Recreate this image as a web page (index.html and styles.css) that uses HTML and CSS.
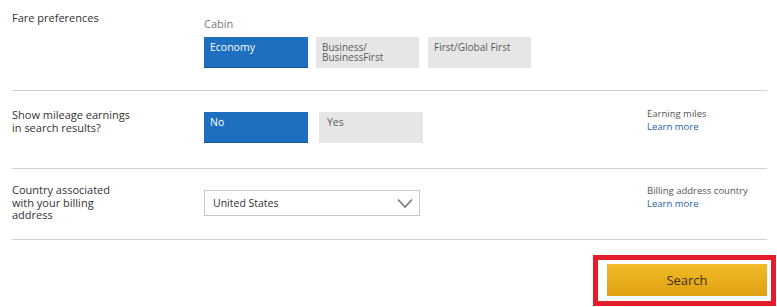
FILE: index.html
```html
<!DOCTYPE html>
<html lang="en">

<head>
    <meta charset="UTF-8">
    <meta name="viewport" content="width=device-width, initial-scale=1.0">
    <title>Search preferences</title>
    <link rel="stylesheet" href="styles.css">
</head>

<body>
    <div id="prefs">
        <div class="row row-fare">
            <div class="label">Fare preferences</div>
            <div class="control">
                <p class="sub-label">Cabin</p>
                <div class="options">
                    <button class="opt selected">Economy</button>
                    <button class="opt">Business/<br>BusinessFirst</button>
                    <button class="opt">First/Global First</button>
                </div>
            </div>
            <div class="info"></div>
        </div>

        <div class="row row-miles">
            <div class="label">Show mileage earnings<br>in search results?</div>
            <div class="control">
                <div class="options options-wide">
                    <button class="opt selected">No</button>
                    <button class="opt">Yes</button>
                </div>
            </div>
            <div class="info">
                <p>Earning miles</p>
                <a href="#">Learn more</a>
            </div>
        </div>

        <div class="row row-country">
            <div class="label">Country associated<br>with your billing<br>address</div>
            <div class="control">
                <div class="select">
                    <span>United States</span>
                    <svg width="16" height="11" viewBox="0 0 16 11">
                        <path d="M1 1.5 L8 9 L15 1.5" fill="none" stroke="#7a7a7a" stroke-width="1.6" />
                    </svg>
                </div>
            </div>
            <div class="info">
                <p>Billing address country</p>
                <a href="#">Learn more</a>
            </div>
        </div>

        <div class="actions">
            <div class="highlight">
                <button id="search">Search</button>
            </div>
        </div>
    </div>
</body>

</html>
```

FILE: styles.css
```css
* {
    padding: 0;
    margin: 0;
    box-sizing: border-box;
    font-family: 'Open Sans', 'Liberation Sans', sans-serif;
}

body {
    background-color: #ffffff;
    color: #333333;
}

#prefs {
    margin-left: 12px;
    width: 755px;
}

.row {
    display: grid;
    grid-template-columns: 192px 443px 1fr;
    border-bottom: 1px solid #d2d2d2;
}

.label {
    font-size: 11px;
    line-height: 12.5px;
    color: #333333;
}

.row-fare {
    height: 91px;
    padding-top: 12px;
}

.row-miles {
    height: 78px;
    padding-top: 18px;
}

.row-country {
    height: 71px;
    padding-top: 15px;
}

.sub-label {
    font-size: 11px;
    color: #777777;
    margin-top: 5px;
    margin-bottom: 7px;
    line-height: 13px;
}

.options {
    display: flex;
    gap: 8px;
}

.options-wide {
    gap: 11px;
    margin-top: 3px;
}

.opt {
    width: 103px;
    height: 31px;
    border: none;
    background-color: #e6e6e6;
    color: #5a5a5a;
    font-size: 10px;
    line-height: 10px;
    text-align: left;
    display: flex;
    align-items: flex-start;
    padding: 5px 6px;
}

.opt.selected {
    width: 104px;
    background-color: #1e6fc0;
    color: #ffffff;
    border-bottom: 1px solid #16589c;
    font-size: 10.5px;
}

.opt:nth-child(3) {
    margin-left: 1px;
}

.options-wide .opt:nth-child(2) {
    width: 104px;
    padding-left: 8px;
    font-size: 10.5px;
}

.select {
    width: 216px;
    height: 26px;
    margin-top: 6px;
    border: 1px solid #c8c8c8;
    display: flex;
    align-items: center;
    justify-content: space-between;
    padding: 0 6px 0 8px;
    font-size: 10.5px;
    color: #333333;
}

.info {
    font-size: 9.5px;
    line-height: 13px;
    color: #555555;
}

.row-miles .info {
    margin-top: -2px;
}

.info a {
    color: #1f62a8;
    text-decoration: none;
}

.actions {
    display: flex;
    justify-content: flex-end;
    padding-top: 15px;
    margin-right: -9px;
}

.highlight {
    border: 5px solid #e31d2b;
    padding: 4px 4px 5px 9px;
}

#search {
    width: 160px;
    height: 32px;
    border: none;
    background: linear-gradient(#f3bc28, #df9f12);
    color: #3d2f0e;
    font-size: 13px;
    cursor: pointer;
}
```
